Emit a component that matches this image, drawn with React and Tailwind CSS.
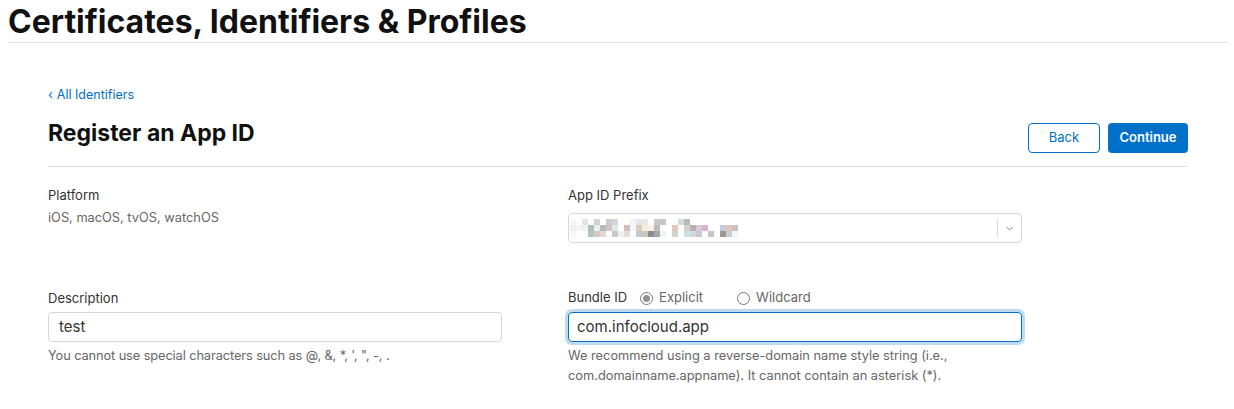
import React from 'react';
import { ChevronDown } from 'lucide-react';

const blurRows = [
  ['#f6f6f6', '#ffffff', '#e2e4e6', '#ffffff', '#d9cfcb', '#ffffff', '#c8cbd0', '#d4d8dc', '#ffffff', '#ffffff', '#f3f4f6', '#e3e6ec', '#ece8e2', '#ffffff', '#c9c9ca', '#c4c5c6', '#ffffff', '#ffffff', '#d8dcd9', '#b5bdb9', '#ffffff', '#ffffff', '#ffffff', '#ffffff', '#ffffff', '#ffffff', '#ffffff', '#ffffff', '#ffffff'],
  ['#eeeeee', '#f4f4f4', '#f0f1f1', '#a9bfbb', '#e9efe9', '#b4b9c2', '#d3c4ca', '#e0e8e4', '#ffffff', '#cdbfbc', '#f5f6f8', '#d9ccb7', '#f5ede0', '#f8efe6', '#b8bdc0', '#ffffff', '#ffffff', '#e0cabd', '#ffffff', '#d2d2c8', '#bcafba', '#d4cdd1', '#d8b4cf', '#ffffff', '#ffffff', '#c5c9de', '#e0c6bb', '#c4c4c6', '#ffffff'],
  ['#f7f7f7', '#ffffff', '#ffffff', '#b3c5c2', '#d9c6c1', '#dcd7d1', '#ffffff', '#c8c8c8', '#eef2f6', '#e7d9d6', '#ffffff', '#c2c8d6', '#c8c8b8', '#868b94', '#a4a8ad', '#f3f4f6', '#ffffff', '#cfd4cf', '#ffffff', '#c8e2ec', '#d6d6d2', '#c6c8d8', '#ffffff', '#c8c2c8', '#ffffff', '#a39794', '#c8ccd8', '#f1f6f8', '#ffffff'],
];

const Field = ({ label, children }) => (
  <div className="flex flex-col">
    <div className="text-[13px] leading-[18px] text-[#333333]">{label}</div>
    {children}
  </div>
);

const Radio = ({ checked, label }) => (
  <label className="flex items-center gap-[6px] text-[13px] text-[#666666]">
    <span className="w-[13px] h-[13px] rounded-full border border-[#767676] bg-white flex items-center justify-center">
      {checked && <span className="w-[7px] h-[7px] rounded-full bg-[#8f8f8f]" />}
    </span>
    {label}
  </label>
);

const App = () => {
  return (
    <div className="w-[1234px] h-[409px] bg-white overflow-hidden font-['Inter',sans-serif] text-[#111111]">
      <header className="mx-[8px] w-[1220px] border-b border-[#e0e0e0] h-[43px]">
        <h1 className="text-[32px] leading-[44px] font-bold text-[#111111]">
          Certificates, Identifiers &amp; Profiles
        </h1>
      </header>

      <main className="mx-[48px] w-[1140px] pt-[44px]">
        <a className="block text-[12.5px] leading-[16px] text-[#0070c9]">
          <span className="mr-[4px]">‹</span>All Identifiers
        </a>

        <div className="flex items-start justify-between mt-[15px] pb-[13px] border-b border-[#dddddd]">
          <h2 className="text-[23px] leading-[30px] font-bold text-[#111111]">Register an App ID</h2>
          <div className="flex gap-[8px] mt-[5px]">
            <button className="w-[72px] h-[30px] rounded-[4px] border border-[#0070c9] text-[#0070c9] text-[13px] bg-white">
              Back
            </button>
            <button className="w-[80px] h-[30px] rounded-[4px] bg-[#0070c9] text-white text-[13px] font-semibold">
              Continue
            </button>
          </div>
        </div>

        <div className="grid grid-cols-[454px_454px] gap-x-[66px] mt-[19px]">
          <Field label="Platform">
            <div className="mt-[5px] text-[12.8px] leading-[18px] text-[#666666]">iOS, macOS, tvOS, watchOS</div>
          </Field>
          <Field label="App ID Prefix">
            <div className="mt-[9px] h-[30px] rounded-[4px] border border-[#d6d6d6] flex items-center">
              <div className="flex-1 pl-[1px] flex flex-col">
                {blurRows.map((row, i) => (
                  <div key={i} className="flex h-[6px]">
                    {row.map((c, j) => (
                      <div key={j} className="w-[6px] h-[6px]" style={{ background: c }} />
                    ))}
                  </div>
                ))}
              </div>
              <div className="w-px h-[18px] bg-[#d6d6d6]" />
              <div className="w-[23px] flex items-center justify-center">
                <ChevronDown size={11} strokeWidth={2} className="text-[#777777]" />
              </div>
            </div>
          </Field>

          <div className="mt-[46px]">
            <Field label="Description">
              <div className="mt-[5px] h-[30px] rounded-[4px] border border-[#d6d6d6] px-[10px] flex items-center text-[15px] text-[#333333]">
                test
              </div>
              <div className="mt-[4px] text-[12.8px] tracking-[-0.1px] leading-[20px] text-[#666666]">
                You cannot use special characters such as @, &amp;, *, ', ", -, .
              </div>
            </Field>
          </div>

          <div className="mt-[46px]">
            <div className="flex items-center h-[18px]">
              <span className="text-[13px] text-[#333333] mr-[13px]">Bundle ID</span>
              <Radio checked label="Explicit" />
              <span className="w-[34px]" />
              <Radio label="Wildcard" />
            </div>
            <div className="mt-[5px] h-[30px] rounded-[4px] border border-[#0070c9] shadow-[0_0_0_3px_rgba(0,112,201,0.25)] px-[8px] flex items-center text-[15px] text-[#333333]">
              com.infocloud.app
            </div>
            <div className="mt-[4px] text-[12.8px] leading-[20px] text-[#666666]">
              We recommend using a reverse-domain name style string (i.e.,
              <br />
              com.domainname.appname). It cannot contain an asterisk (*).
            </div>
          </div>
        </div>
      </main>
    </div>
  );
};

export default App;
